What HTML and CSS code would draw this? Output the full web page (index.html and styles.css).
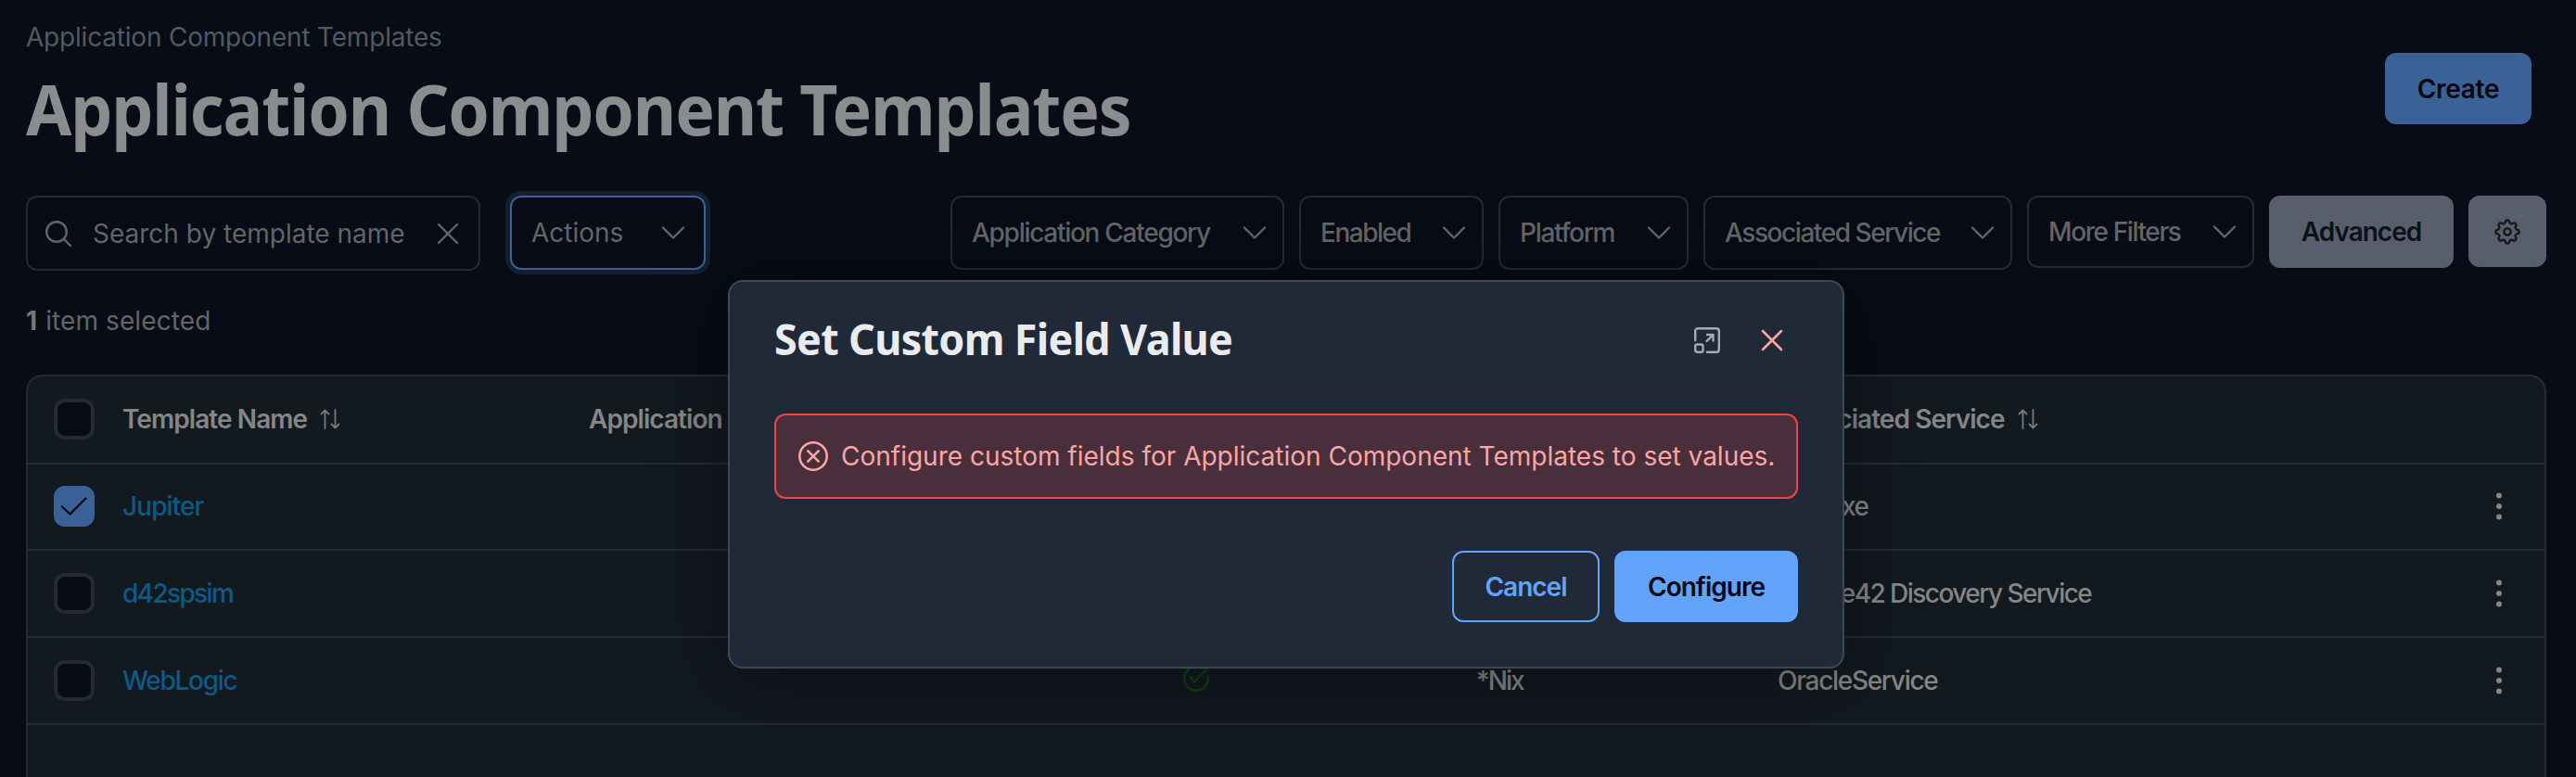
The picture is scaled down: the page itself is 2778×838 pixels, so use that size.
FILE: index.html
```html
<!DOCTYPE html>
<html lang="en">
<head>
<meta charset="utf-8">
<title>Application Component Templates</title>
<link rel="stylesheet" href="styles.css">
</head>
<body>
<svg class="defs" aria-hidden="true">
  <symbol id="chevron" viewBox="0 0 28 28"><path d="M3 8.500 14 19.500 25 8.500"/></symbol>
  <symbol id="close" viewBox="0 0 28 28"><path d="M4 4 24 24M24 4 4 24"/></symbol>
  <symbol id="sort" viewBox="0 0 22 22"><path d="M5.500 21V1.500M1.500 5.500l4-4 4 4M16.500 1V20.500M12.500 16.500l4 4 4-4"/></symbol>
</svg>
<div class="page">
  <header class="header">
    <div>
      <div class="crumb">Application Component Templates</div>
      <h1 class="title">Application Component Templates</h1>
    </div>
    <button class="btn create">Create</button>
  </header>

  <div class="toolbar">
    <div class="search">
      <svg class="ic" viewBox="0 0 28 28"><circle cx="12" cy="12" r="10.800"/><path d="M19.800 19.800 27 27"/></svg>
      <span class="search-text">Search by template name</span>
      <svg class="ic"><use href="#close"/></svg>
    </div>
    <div class="select actions"><span>Actions</span><svg class="ic"><use href="#chevron"/></svg></div>
    <div class="filters">
      <div class="select f1"><span>Application Category</span><svg class="ic"><use href="#chevron"/></svg></div>
      <div class="select f2"><span>Enabled</span><svg class="ic"><use href="#chevron"/></svg></div>
      <div class="select f3"><span>Platform</span><svg class="ic"><use href="#chevron"/></svg></div>
      <div class="select f4"><span>Associated Service</span><svg class="ic"><use href="#chevron"/></svg></div>
      <div class="select f5"><span>More Filters</span><svg class="ic"><use href="#chevron"/></svg></div>
      <button class="btn advanced">Advanced</button>
      <button class="btn gear" aria-label="Settings"><svg class="ic" viewBox="0 0 28 28"><path d="M24.790 11.850A2.200 2.200 0 0 1 24.790 16.150A2.500 2.500 0 0 0 23.150 20.110A2.200 2.200 0 0 1 20.110 23.150A2.500 2.500 0 0 0 16.150 24.790A2.200 2.200 0 0 1 11.850 24.790A2.500 2.500 0 0 0 7.890 23.150A2.200 2.200 0 0 1 4.850 20.110A2.500 2.500 0 0 0 3.210 16.150A2.200 2.200 0 0 1 3.210 11.850A2.500 2.500 0 0 0 4.850 7.890A2.200 2.200 0 0 1 7.890 4.850A2.500 2.500 0 0 0 11.850 3.210A2.200 2.200 0 0 1 16.150 3.210A2.500 2.500 0 0 0 20.110 4.850A2.200 2.200 0 0 1 23.150 7.890A2.500 2.500 0 0 0 24.790 11.850Z"/><circle cx="14" cy="14" r="3.600"/></svg></button>
    </div>
  </div>

  <div class="selected"><b>1</b> item selected</div>

  <div class="table">
    <div class="row head">
      <span class="check"></span>
      <span class="cell"><span>Template Name</span><svg class="sort"><use href="#sort"/></svg></span>
      <span class="cell">Application Category</span>
      <span class="cell">Enabled</span>
      <span class="cell">Platform</span>
      <span class="cell"><span>Associated Service</span><svg class="sort"><use href="#sort"/></svg></span>
      <span></span>
    </div>
    <div class="row first">
      <span class="check on"><svg viewBox="0 0 44 44"><path d="M9 22.500 17.500 30.500 34.500 13.500"/></svg></span>
      <a class="cell link l1">Jupiter</a><span></span><span></span><span></span>
      <span class="cell s1">java.exe</span>
      <svg class="kebab" viewBox="0 0 8 30"><circle cx="4" cy="3.500" r="3"/><circle cx="4" cy="15" r="3"/><circle cx="4" cy="26.500" r="3"/></svg>
    </div>
    <div class="row">
      <span class="check"></span>
      <a class="cell link l2">d42spsim</a><span></span><span></span><span></span>
      <span class="cell s2">Device42 Discovery Service</span>
      <svg class="kebab" viewBox="0 0 8 30"><circle cx="4" cy="3.500" r="3"/><circle cx="4" cy="15" r="3"/><circle cx="4" cy="26.500" r="3"/></svg>
    </div>
    <div class="row">
      <span class="check"></span>
      <a class="cell link l3">WebLogic</a><span></span>
      <svg class="ok" viewBox="0 0 28 28"><path d="M26.500 11.500A12.800 12.800 0 1 1 20 2.700M7.500 12 12 17.500 26 3"/></svg>
      <span class="cell s4">*Nix</span>
      <span class="cell s3">OracleService</span>
      <svg class="kebab" viewBox="0 0 8 30"><circle cx="4" cy="3.500" r="3"/><circle cx="4" cy="15" r="3"/><circle cx="4" cy="26.500" r="3"/></svg>
    </div>
  </div>
</div>

<div class="modal" role="dialog">
  <div class="modal-head">
    <h2 class="modal-title">Set Custom Field Value</h2>
    <svg class="ic expand" viewBox="0 0 28 28"><path d="M1.200 14V4a2.800 2.800 0 0 1 2.800-2.800H24A2.800 2.800 0 0 1 26.800 4V24a2.800 2.800 0 0 1-2.800 2.800H14M14 8h6.500V14.500M20.500 8 13.500 15"/><rect x="1.200" y="18.500" width="8.300" height="8.300" rx="2"/></svg>
    <svg class="ic x"><use href="#close"/></svg>
  </div>
  <div class="alert">
    <svg class="ic err" viewBox="0 0 32 32"><circle cx="16" cy="16" r="14.700"/><path d="M10.300 10.300 21.700 21.700M21.700 10.300 10.300 21.700"/></svg>
    <span>Configure custom fields for Application Component Templates to set values.</span>
  </div>
  <div class="modal-foot">
    <button class="btn cancel">Cancel</button>
    <button class="btn configure">Configure</button>
  </div>
</div>
</body>
</html>
```
FILE: styles.css
```css
* { box-sizing: border-box; }
body {
  margin: 0;
  width: 2778px;
  height: 838px;
  overflow: hidden;
  background: #070c16;
  color: #646566;
  font: 400 28px/40px Inter, "Liberation Sans", sans-serif;
  white-space: nowrap;
}
.defs { display: none; }
svg { display: block; fill: none; stroke: currentColor; stroke-width: 2.4; stroke-linecap: round; stroke-linejoin: round; }
.ic { width: 28px; height: 28px; flex: none; }
.page { padding: 0 32px 0 28px; }

.header { display: flex; justify-content: space-between; height: 211px; padding-right: 16px; }
.crumb { padding-top: 20px; color: #505a63; letter-spacing: -.2px; }
.title {
  margin: 5px 0 0;
  font: 700 76px/104px "Noto Sans", sans-serif;
  letter-spacing: -1.2px;
  color: #8b8c8e;
  transform: scaleX(.94);
  transform-origin: left;
}

.btn {
  height: 77px;
  margin: 0;
  padding: 0;
  border: 0;
  border-radius: 12px;
  font: 600 28px/40px Inter, sans-serif;
  letter-spacing: -1px;
  text-align: center;
}
.create { width: 158px; margin-top: 57px; background: #3a6296; color: #04070d; letter-spacing: -.3px; }

.toolbar { display: flex; align-items: flex-start; height: 81px; }
.search {
  display: flex;
  align-items: center;
  width: 490px;
  height: 81px;
  padding: 0 19px;
  border: 2px solid #262a33;
  border-radius: 12px;
}
.search-text { flex: 1; padding-left: 23px; }
.select {
  display: flex;
  align-items: center;
  justify-content: space-between;
  height: 80px;
  padding: 0 16px 0 21px;
  border: 2px solid #262a33;
  border-radius: 12px;
  font-weight: 500;
}
.actions {
  width: 211px;
  margin-left: 32px;
  padding-right: 19px;
  border-color: #3a6296;
  box-shadow: 0 0 0 5px #142030;
  font-weight: 400;
}
.filters { display: flex; gap: 16px; margin-left: auto; }
.f1 { width: 360px; letter-spacing: -1.28px; }
.f2 { width: 199px; letter-spacing: -1.5px; }
.f3 { width: 205px; letter-spacing: -1.3px; }
.f4 { width: 333px; letter-spacing: -1.44px; }
.f5 { width: 245px; height: 78px; letter-spacing: -1.4px; }
.advanced { width: 199px; height: 78px; background: #585e6b; color: #0d1115; }
.gear { display: grid; place-items: center; width: 84px; background: #585e6b; color: #14181d; }

.selected { margin-top: 34px; height: 78px; letter-spacing: .1px; }
.selected b { margin-right: 1px; font-weight: 700; color: #77787a; }

.table {
  height: 460px;
  border: 2px solid #262a33;
  border-radius: 18px;
  background: #12191f;
  color: #868686;
}
.row {
  display: grid;
  grid-template-columns: 102px 503px 641px 316px 325px 762px 1fr;
  align-items: center;
  height: 94px;
  border-bottom: 2px solid #262a33;
  font-weight: 500;
}
.head { height: 95px; padding-bottom: 1px; font-weight: 600; letter-spacing: -.93px; }
.first { height: 93px; padding-bottom: 1px; }
.cell { display: flex; align-items: center; }
.sort { width: 22px; height: 22px; margin-left: 14px; stroke-width: 1.8; color: #77797b; }
.check {
  width: 44px;
  height: 44px;
  margin-left: 28px;
  border: 4px solid #262a33;
  border-radius: 12px;
  background: #070b15;
}
.check.on { border: 0; background: #3a6296; color: #04070d; }
.link { color: #0c5a86; }
.l1 { letter-spacing: -.9px; }
.l2 { letter-spacing: -1.65px; }
.l3 { letter-spacing: -1.3px; }
.s1 { letter-spacing: -1.6px; }
.s2 { letter-spacing: -1.54px; }
.s3 { letter-spacing: -1.3px; }
.s4 { letter-spacing: -1.9px; }
.kebab { width: 8px; height: 30px; margin-left: 12px; fill: #868686; stroke: none; }
.ok { width: 28px; height: 28px; margin-top: -4px; color: #0b4312; }

.modal {
  position: absolute;
  left: 785px;
  top: 302px;
  width: 1204px;
  height: 419px;
  padding: 0 48px;
  border: 2px solid #3f4856;
  border-radius: 16px;
  background: #202937;
  box-shadow: 0 8px 80px rgba(0, 0, 0, .4);
}
.modal-head { display: flex; align-items: center; height: 126px; margin-bottom: 16px; }
.modal-title {
  flex: 1;
  margin: -4px 0 0;
  font: 700 47px/64px "Noto Sans", sans-serif;
  letter-spacing: -.7px;
  color: #e9ebef;
  transform: scaleX(.955);
  transform-origin: left;
}
.expand { color: #a6abb3; margin-right: 42px; }
.x { color: #fca5a5; margin-right: 14px; stroke-width: 2.6; }
.alert {
  display: flex;
  align-items: center;
  height: 92px;
  padding-left: 24px;
  border: 2px solid #ef4444;
  border-radius: 12px;
  background: #482f3b;
  color: #fca5a5;
}
.err { width: 32px; height: 32px; margin-right: 14px; stroke-width: 2.6; }
.modal-foot { display: flex; justify-content: flex-end; gap: 16px; margin-top: 56px; }
.cancel { width: 159px; border: 2px solid #62a4fb; background: none; color: #62a4fb; }
.configure { width: 198px; background: #62a4fb; color: #050a14; }
```
